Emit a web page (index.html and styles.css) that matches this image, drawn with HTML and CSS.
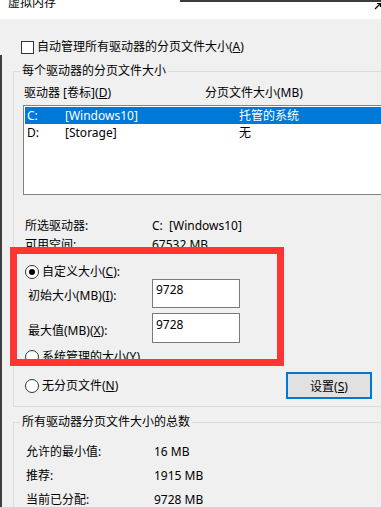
FILE: index.html
```html
<!DOCTYPE html>
<html lang="zh-CN">

<head>
    <meta charset="UTF-8">
    <meta name="viewport" content="width=device-width, initial-scale=1.0">
    <title>虚拟内存</title>
    <link rel="stylesheet" href="styles.css">
</head>

<body>
    <div class="window">
        <div class="titlebar">
            <span class="title">虚拟内存</span>
            <svg class="cursor" width="7" height="8" viewBox="0 0 7 8">
                <path d="M1 7 L6 2 M3 1.5 H6.5 V5" stroke="#000" stroke-width="1.2" fill="none" />
            </svg>
        </div>

        <div class="dialog">
            <label class="check-row">
                <span class="checkbox"></span>
                <span>自动管理所有驱动器的分页文件大小(<u>A</u>)</span>
            </label>

            <fieldset class="group group-drives">
                <legend>每个驱动器的分页文件大小</legend>

                <div class="list-head">
                    <span class="col-drive">驱动器 [卷标](<u>D</u>)</span>
                    <span class="col-size">分页文件大小(MB)</span>
                </div>

                <div class="drive-list">
                    <div class="drive-row selected">
                        <span class="col-letter">C:</span>
                        <span class="col-label">[Windows10]</span>
                        <span class="col-value">托管的系统</span>
                    </div>
                    <div class="drive-row">
                        <span class="col-letter">D:</span>
                        <span class="col-label">[Storage]</span>
                        <span class="col-value">无</span>
                    </div>
                </div>

                <div class="info">
                    <div class="info-row">
                        <span class="info-label">所选驱动器:</span>
                        <span>C:&nbsp;&nbsp;[Windows10]</span>
                    </div>
                    <div class="info-row">
                        <span class="info-label">可用空间:</span>
                        <span>67532 MB</span>
                    </div>
                </div>

                <label class="radio-row custom-row">
                    <span class="radio checked"></span>
                    <span>自定义大小(<u>C</u>):</span>
                </label>

                <div class="size-row">
                    <span class="size-label">初始大小(MB)(<u>I</u>):</span>
                    <input class="size-input" type="text" value="9728">
                </div>
                <div class="size-row second">
                    <span class="size-label">最大值(MB)(<u>X</u>):</span>
                    <input class="size-input tall" type="text" value="9728">
                </div>

                <label class="radio-row system-row">
                    <span class="radio"></span>
                    <span>系统管理的大小(<u>Y</u>)</span>
                </label>

                <div class="set-row">
                    <label class="radio-row">
                        <span class="radio"></span>
                        <span>无分页文件(<u>N</u>)</span>
                    </label>
                    <button class="set-button" type="button">设置(<u>S</u>)</button>
                </div>
            </fieldset>

            <fieldset class="group group-total">
                <legend>所有驱动器分页文件大小的总数</legend>
                <div class="total-row">
                    <span class="total-label">允许的最小值:</span>
                    <span>16 MB</span>
                </div>
                <div class="total-row">
                    <span class="total-label">推荐:</span>
                    <span>1915 MB</span>
                </div>
                <div class="total-row">
                    <span class="total-label">当前已分配:</span>
                    <span>9728 MB</span>
                </div>
            </fieldset>
        </div>

        <!-- annotation frame drawn over the dialog -->
        <div class="highlight"></div>
    </div>
</body>

</html>
```

FILE: styles.css
```css
body {
    margin: 0;
    padding: 0;
    font-family: "Noto Sans", "Noto Sans CJK SC", sans-serif;
    font-size: 12px;
    color: #000;
    background-color: #f0f0f0;
    overflow: hidden;
}

.window {
    position: relative;
    width: 381px;
    height: 507px;
    overflow: hidden;
    background-color: #f0f0f0;
}

/* dark edge of the window on the left */
.window::before {
    content: "";
    position: absolute;
    left: 0;
    top: 55px;
    bottom: 0;
    width: 2px;
    background-color: #3f3f3f;
}

.titlebar {
    position: relative;
    height: 19px;
    background: #fff;
    overflow: hidden;
}

.titlebar::before {
    content: "";
    position: absolute;
    left: 180px;
    right: 0;
    top: 0;
    height: 2px;
    background-color: #3c3c3c;
}

.title {
    display: block;
    margin-left: 8px;
    margin-top: -4px;
    line-height: 14px;
}

.cursor {
    position: absolute;
    right: 0;
    top: 2px;
}

.dialog {
    width: 420px;
}

u {
    text-decoration: underline;
    text-underline-offset: 1px;
}

/* checkbox and radio rows */
.check-row,
.radio-row {
    display: flex;
    align-items: center;
    height: 16px;
    line-height: 16px;
}

.check-row {
    margin-top: 20px;
    margin-left: 21px;
    gap: 3px;
}

.checkbox {
    width: 11px;
    height: 11px;
    border: 1px solid #333;
    background: #fff;
}

.radio {
    position: relative;
    width: 12px;
    height: 12px;
    border: 1px solid #333;
    border-radius: 50%;
    background: #fff;
    margin-right: 3px;
}

.radio.checked::after {
    content: "";
    position: absolute;
    left: 3px;
    top: 3px;
    width: 6px;
    height: 6px;
    border-radius: 50%;
    background: #000;
}

/* group boxes */
.group {
    margin: 0 0 0 13px;
    padding: 0 0 0 6px;
    border: 1px solid #dcdcdc;
    min-width: 0;
}

.group legend {
    padding: 0 2px;
    line-height: 16px;
}

.group-drives {
    margin-top: 8px;
    padding-top: 6px;
    padding-bottom: 7px;
}

.list-head {
    display: flex;
    height: 16px;
    line-height: 16px;
    margin-left: 4px;
}

.col-drive {
    width: 181px;
}

.drive-list {
    margin-top: 4px;
    margin-left: 3px;
    width: 400px;
    height: 86px;
    padding: 1px;
    border: 1px solid #828282;
    background: #fff;
}

.drive-row {
    display: flex;
    height: 17px;
    line-height: 17px;
    padding-left: 2px;
}

.drive-row.selected {
    background-color: #0078d7;
    color: #fff;
}

.col-letter {
    width: 38px;
}

.col-label {
    width: 174px;
}

.info {
    margin-top: 21px;
}

.info-row {
    display: flex;
    height: 19px;
    line-height: 19px;
    margin-left: 5px;
}

.info-label {
    width: 127px;
}

.custom-row {
    margin-top: 11px;
    margin-left: 5px;
    height: 14px;
}

.size-row {
    display: flex;
    align-items: center;
    margin-left: 8px;
}

.size-row.second {
    margin-top: 5px;
}

.size-label {
    width: 124px;
    padding-top: 3px;
}

.size-input {
    box-sizing: border-box;
    width: 88px;
    height: 29px;
    padding: 0 3px 8px;
    border: 1px solid #7a7a7a;
    font-family: "Noto Sans", sans-serif;
    font-size: 12px;
    background: #fff;
    outline: none;
}

.size-input.tall {
    height: 30px;
}

.system-row {
    margin-top: 7px;
    margin-left: 5px;
    height: 14px;
}

.set-row {
    display: flex;
    justify-content: space-between;
    align-items: center;
    width: 347px;
    margin-top: 8px;
    margin-left: 5px;
}

.set-button {
    width: 86px;
    height: 27px;
    padding: 0;
    border: 2px solid #0078d7;
    background-color: #e1e1e1;
    font-family: "Noto Sans", "Noto Sans CJK SC", sans-serif;
    font-size: 12px;
    color: #000;
}

.group-total {
    margin-top: 7px;
    padding-top: 10px;
    padding-bottom: 20px;
}

.total-row {
    display: flex;
    height: 24px;
    line-height: 24px;
    margin-left: 6px;
}

.total-label {
    width: 128px;
}

.highlight {
    position: absolute;
    left: 10px;
    top: 247px;
    width: 260px;
    height: 105px;
    border: 7px solid #ff3434;
}
```
